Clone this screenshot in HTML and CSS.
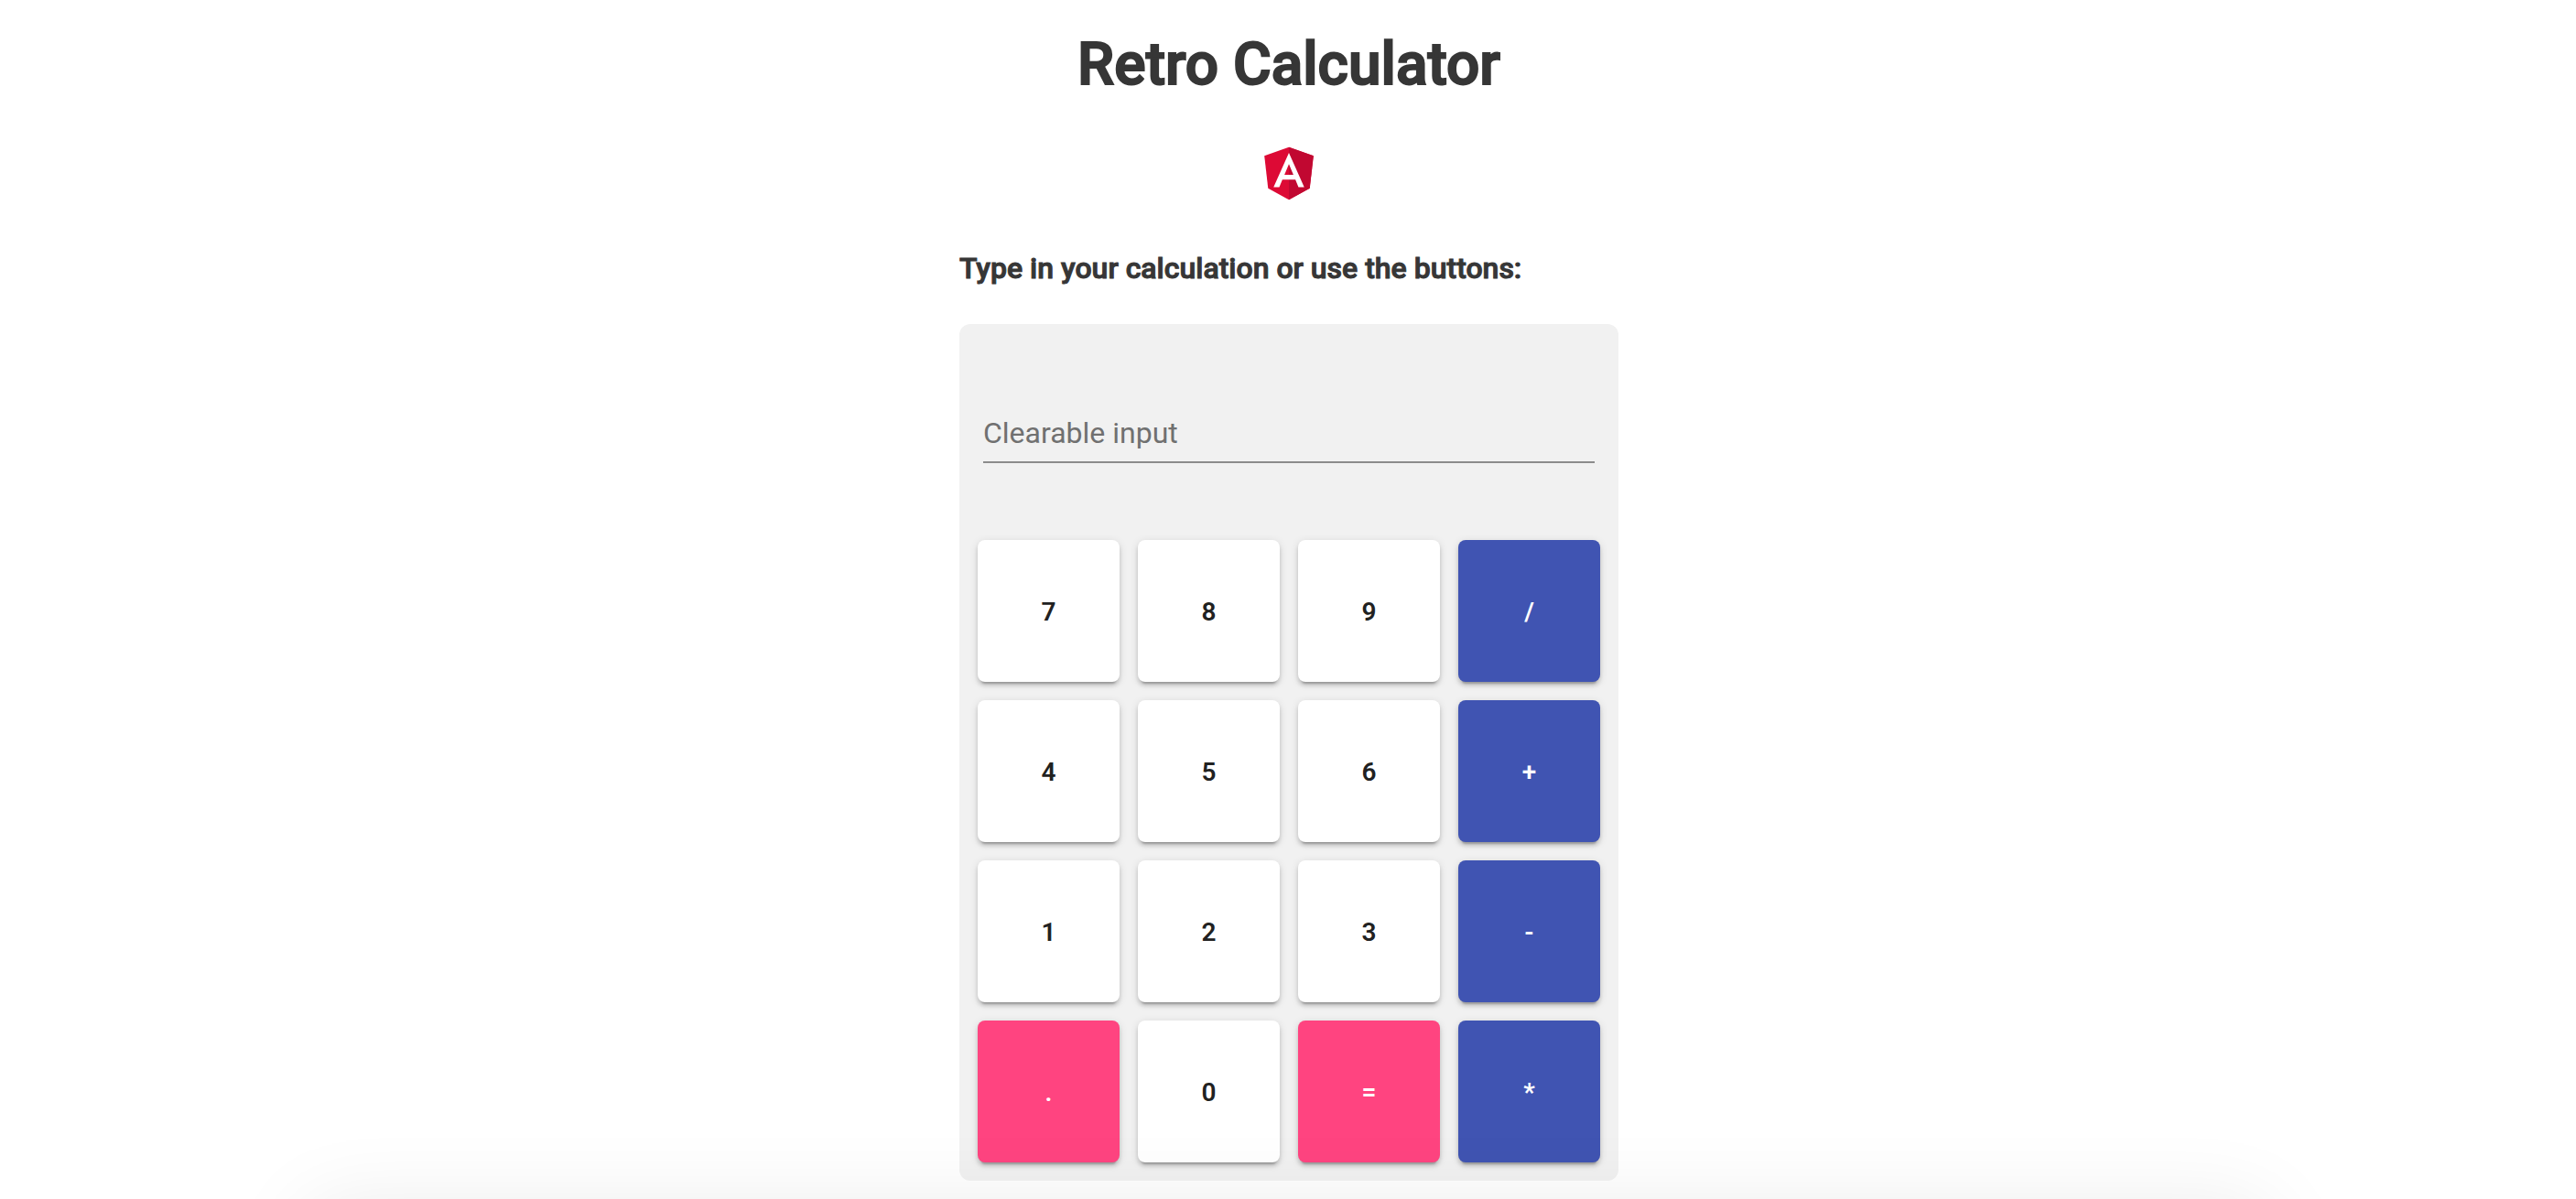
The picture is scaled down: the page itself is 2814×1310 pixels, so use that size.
FILE: index.html
```html
<!DOCTYPE html>
<html lang="en">
<head>
<meta charset="utf-8">
<title>Retro Calculator</title>
<link rel="stylesheet" href="styles.css">
</head>
<body>
<main class="page">
<h1 class="title">Retro Calculator</h1>
<svg class="logo" viewBox="0 0 250 250" aria-label="Angular" role="img"><path fill="#dd0a35" d="M125 30 31.900 63.200 46.100 186.300 125 230 203.900 186.300 218.100 63.200z"/><path fill="#c10831" d="M125 30V230L203.900 186.300 218.100 63.200z"/><path fill="#fff" d="M125 52.100 66.800 182.600H88.500L100.200 153.400H149.600L161.300 182.600H183zM142 135.400H108L125 94.500z"/></svg>
<section class="app">
<label class="prompt" for="calculation">Type in your calculation or use the buttons:</label>
<form class="calculator">
<div class="field"><input id="calculation" class="display" type="text" placeholder="Clearable input"></div>
<div class="keys">
<button class="key" type="button">7</button><button class="key" type="button">8</button><button class="key" type="button">9</button><button class="key operator" type="button">/</button>
<button class="key" type="button">4</button><button class="key" type="button">5</button><button class="key" type="button">6</button><button class="key operator" type="button">+</button>
<button class="key" type="button">1</button><button class="key" type="button">2</button><button class="key" type="button">3</button><button class="key operator" type="button">-</button>
<button class="key accent" type="button">.</button><button class="key" type="button">0</button><button class="key accent" type="button">=</button><button class="key operator" type="button">*</button>
</div>
</form>
</section>
</main>
</body>
</html>
```
FILE: styles.css
```css
* { box-sizing: border-box; }
body { margin: 0; background: #fff; color: #363636; font-family: Roboto, sans-serif; }
/* Soft shade along the bottom edge of the window */
body::after { content: ""; position: fixed; top: 100%; left: 12%; right: 12%; height: 400px; box-shadow: 0 12px 90px rgba(0, 0, 0, .09); pointer-events: none; }
.page { display: flex; flex-direction: column; align-items: center; padding: 33px 0 20px 2px; }
.title { margin: 0; font-size: 64px; line-height: 76px; font-weight: 500; -webkit-text-stroke: 2px; }
.logo { width: 72px; height: 72px; margin-top: 43px; }
.app { width: 100%; max-width: 720px; margin-top: 49px; }
.prompt { display: block; font-size: 32px; line-height: 40px; font-weight: 500; -webkit-text-stroke: 1px; }
.calculator { margin-top: 41px; padding: 20px; border-radius: 12px; background: #f1f1f1; }
.field { padding: 56px 6px 84px; }
.display { display: block; width: 100%; height: 76px; padding: 12px 0 0; border: 0; border-bottom: 2px solid #8c8c8c; background: transparent; font: 400 32px/40px Roboto, sans-serif; outline: 0; }
.display::placeholder { color: #707070; opacity: 1; }
.keys { display: grid; grid-template-columns: repeat(4, 1fr); gap: 20px; }
.key { aspect-ratio: 1; padding: 2px 0 0; border: 0; border-radius: 8px; background: #fff; color: #212121; font: 600 28px/72px Roboto, sans-serif; box-shadow: 0 6px 2px -4px rgba(0,0,0,.2), 0 4px 4px rgba(0,0,0,.14), 0 2px 10px rgba(0,0,0,.12); }
.operator { background: #4054b2; color: #fff; }
.accent { background: #ff4480; color: #fff; }
```
